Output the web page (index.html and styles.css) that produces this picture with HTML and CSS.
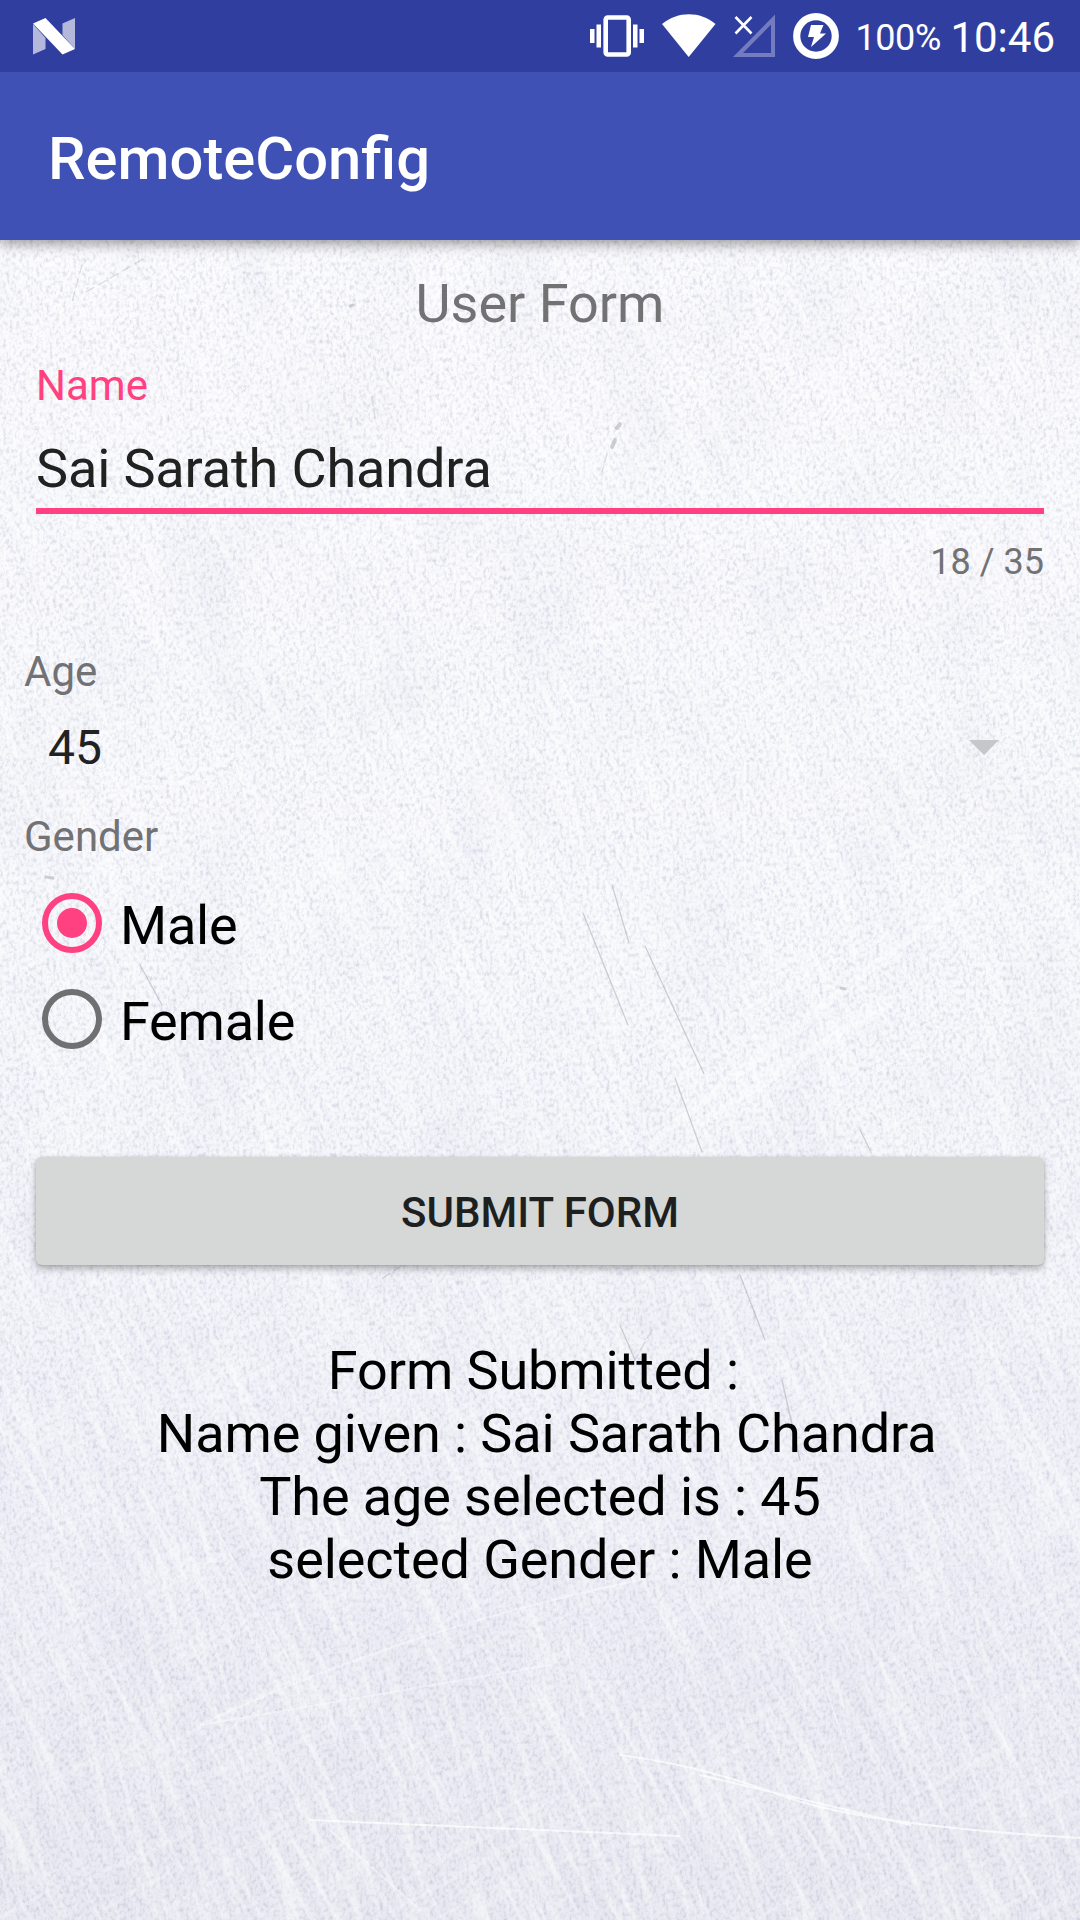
FILE: index.html
```html
<!DOCTYPE html>
<html lang="en">
<head>
<meta charset="utf-8">
<title>RemoteConfig</title>
<link rel="stylesheet" href="styles.css">
</head>
<body>
<div class="screen">
  <svg class="texture" width="1080" height="1680" viewBox="0 0 1080 1680" aria-hidden="true">
    <defs>
      <linearGradient id="shade" x1="0.6" y1="0" x2="0.6" y2="1">
        <stop offset="0" stop-color="#fbfbfe"/>
        <stop offset="0.45" stop-color="#f7f8fc"/>
        <stop offset="0.75" stop-color="#eff0f7"/>
        <stop offset="1" stop-color="#e7e8f0"/>
      </linearGradient>
      <filter id="grain" x="0" y="0" width="100%" height="100%" color-interpolation-filters="sRGB">
        <feTurbulence type="fractalNoise" baseFrequency="0.3 0.22" numOctaves="3" seed="4"/>
        <feColorMatrix values="0 0 0 0 0.66  0 0 0 0 0.67  0 0 0 0 0.76  1 0 0 0 -0.44"/>
      </filter>
      <filter id="streaks" x="0" y="0" width="100%" height="100%" color-interpolation-filters="sRGB">
        <feTurbulence type="fractalNoise" baseFrequency="0.14 0.006" numOctaves="3" seed="9"/>
        <feColorMatrix values="0 0 0 0 1  0 0 0 0 1  0 0 0 0 1  3 0 0 0 -1.45"/>
      </filter>
      <filter id="clouds" x="0" y="0" width="100%" height="100%" color-interpolation-filters="sRGB">
        <feTurbulence type="fractalNoise" baseFrequency="0.012 0.008" numOctaves="3" seed="21"/>
        <feColorMatrix values="0 0 0 0 0.8  0 0 0 0 0.81  0 0 0 0 0.88  1.6 0 0 0 -0.72"/>
      </filter>
    </defs>
    <rect width="1080" height="1680" fill="url(#shade)"/>
    <rect width="1080" height="1680" filter="url(#clouds)" opacity="0.22"/>
    <rect width="1080" height="1680" filter="url(#grain)"/>
    <rect x="-900" y="-900" width="2800" height="3200" filter="url(#streaks)" transform="rotate(-28 540 840)" opacity="0.48"/>
    <rect x="-900" y="-900" width="2800" height="3200" filter="url(#streaks)" transform="rotate(-14 540 840)" opacity="0.36"/>
    <rect x="-900" y="-900" width="2800" height="3200" filter="url(#streaks)" transform="rotate(62 540 840)" opacity="0.26"/>
    <g fill="none" stroke="#fff" stroke-linecap="round">
      <path stroke-width="9" opacity="0.35" d="M650 905Q800 780 1000 630M690 890 890 760"/>
      <path stroke-width="2" opacity="0.7" d="M620 1515Q700 1525 780 1555T1080 1598M700 1535 910 1585M310 1580 680 1596"/>
      <path stroke-width="2" opacity="0.4" d="M250 435 480 790M360 330 560 700M745 520 745 680M200 1485Q400 1390 640 1340M200 1485 550 1425M820 1430 850 1520M330 1590 420 1670M100 1080 300 1440"/>
    </g>
    <g fill="none" stroke="#b0b1bb" stroke-width="1.3" stroke-linecap="round" opacity="0.6">
      <path d="M612 645 629 703M645 706 704 834M583 673 628 785M675 838 702 912M740 1035 765 1100M782 1140 800 1220M860 890 870 910M620 1085 635 1120M140 725 162 765"/>
      <path stroke-dasharray="9 5" opacity="0.7" d="M86 52 145 18M82 25 72 62M372 157 375 178M652 1090 632 1125M425 1010 380 1040M607 214 602 232"/>
      <path stroke-width="4" d="M620 184 617 188M615 200 612 207"/>
      <path stroke-width="3" d="M350 66 353 65M46 637 53 638M841 748 845 749"/>
    </g>
  </svg>

  <header class="status-bar">
    <svg class="n-logo" width="44" height="38" viewBox="0 0 44 38">
      <path fill="#fff" fill-opacity=".64" d="M1 6 13.500 20V31L1 36.500ZM30.500 5.500 43 0V31L30.500 17Z"/>
      <path fill="#fff" d="M1 5.500 13.500 0 43 31 30.500 36.500Z"/>
    </svg>
    <div class="status-icons">
      <svg class="vibrate" width="54" height="42" viewBox="0 0 54 42">
        <path fill="#fff" d="M0 14h4.500v14H0ZM6.500 9.500h4.500v23H6.500ZM43 9.500h4.500v23H43ZM49.500 14H54v14h-4.500Z"/>
        <rect x="15.700" y="2.500" width="23" height="37" rx="2" fill="none" stroke="#fff" stroke-width="4.600"/>
      </svg>
      <svg class="wifi" width="54" height="43" viewBox="0 0 54 43"><path fill="#fff" d="M0 10C16-3 38-3 53.500 10L26.700 43Z"/></svg>
      <svg class="signal" width="43" height="43" viewBox="0 0 43 43">
        <path fill="#fff" fill-opacity=".32" fill-rule="evenodd" d="M0 43 42 0.500V43ZM10 39H38V10.500Z"/>
        <path stroke="#fff" stroke-width="2.600" d="M2.500 3 18.500 19.500M18.500 3 2.500 19.500"/>
      </svg>
      <svg class="battery" width="46" height="46" viewBox="0 0 46 46">
        <circle cx="23" cy="23" r="19.300" fill="none" stroke="#fff" stroke-width="7.200"/>
        <path fill="#fff" d="M18 12H30.500L27 20.500H33L18 34 21 24H15Z"/>
      </svg>
    </div>
    <span class="battery-level">100%</span>
    <span class="clock">10:46</span>
  </header>

  <div class="app-bar"><h1 class="app-title">RemoteConfig</h1></div>

  <main class="form">
    <h2 class="form-title">User Form</h2>
    <section class="name-field">
      <div class="name-label">Name</div>
      <div class="name-value">Sai Sarath Chandra</div>
      <div class="counter">18 / 35</div>
    </section>
    <div class="label age-label">Age</div>
    <div class="spinner">
      <span>45</span>
      <svg class="caret" width="30" height="15" viewBox="0 0 30 15"><path fill="#c6c7cb" d="M0 0H30L15 15Z"/></svg>
    </div>
    <div class="label gender-label">Gender</div>
    <div class="radio-group">
      <div class="radio"><span class="dot checked"></span><span>Male</span></div>
      <div class="radio"><span class="dot"></span><span>Female</span></div>
    </div>
    <button class="submit">SUBMIT FORM</button>
    <div class="result">Form Submitted : 
 Name given : Sai Sarath Chandra
The age selected is : 45
selected Gender : Male</div>
  </main>
</div>
</body>
</html>
```
FILE: styles.css
```css
* { box-sizing: border-box; }

body {
  margin: 0;
  font-family: Roboto, "Noto Sans", sans-serif;
}

.screen {
  position: relative;
  width: 1080px;
  height: 1920px;
  overflow: hidden;
  background: #f3f3f9;
}

/* Scratched paper backdrop, painted beneath the form */
.texture {
  position: absolute;
  left: 0;
  top: 240px;
}

.status-bar {
  position: relative;
  display: flex;
  align-items: flex-start;
  height: 72px;
  padding: 0 25px 0 32px;
  background: #303f9f;
  color: #fff;
  z-index: 2;
}

.n-logo { margin-top: 18px; }

.status-icons {
  display: flex;
  align-items: flex-start;
  margin-left: auto;
}

.vibrate { margin-top: 15px; }
.wifi { margin: 14px 0 0 18px; }
.signal { margin: 14px 0 0 17px; }
.battery { margin: 13px 0 0 17px; }

.battery-level {
  margin-left: 16px;
  width: 86px;
  font-size: 36px;
  line-height: 42px;
  padding-top: 17px;
  letter-spacing: -.4px;
}

.clock {
  margin-left: 9px;
  font-size: 42px;
  line-height: 48px;
  padding-top: 14px;
}

.app-bar {
  position: relative;
  display: flex;
  align-items: center;
  height: 168px;
  padding: 5px 48px 0;
  background: #3f51b5;
  box-shadow: 0 4px 12px rgba(0, 0, 0, .38);
  z-index: 1;
}

.app-title {
  margin: 0;
  font-size: 59.7px;
  font-weight: 500;
  line-height: 70px;
  color: #fff;
}

.form {
  position: relative;
  display: flex;
  flex-direction: column;
  padding: 32px 24px 0;
}

.form-title {
  margin: 0;
  font-size: 54px;
  font-weight: 400;
  line-height: 64px;
  text-align: center;
  color: #727274;
}

.name-field {
  display: flex;
  flex-direction: column;
  padding: 25px 12px 0;
}

.name-label {
  font-size: 42px;
  line-height: 50px;
  color: #ff4081;
}

.name-value {
  margin-top: 26px;
  height: 77px;
  font-size: 54px;
  line-height: 64px;
  letter-spacing: -.13px;
  color: #212121;
  border-bottom: 6px solid #ff4081;
}

.counter {
  margin-top: 27px;
  font-size: 36px;
  line-height: 42px;
  text-align: right;
  color: #727274;
}

.label {
  font-size: 42px;
  line-height: 50px;
  color: #727274;
}

.age-label { margin-top: 64px; }

.spinner {
  display: flex;
  align-items: center;
  justify-content: space-between;
  height: 72px;
  margin-top: 15px;
  padding: 0 57px 0 24px;
  font-size: 48px;
  line-height: 56px;
  color: #212121;
}

.caret { margin-bottom: 2px; }

.gender-label { margin-top: 28px; }

.radio-group { margin-top: 13px; }

.radio {
  display: flex;
  align-items: center;
  height: 96px;
  padding-left: 18px;
  gap: 18px;
  font-size: 54px;
  line-height: 64px;
  letter-spacing: -.2px;
  color: #000;
}

.radio span:last-child { padding-top: 6px; }

.dot {
  display: grid;
  place-items: center;
  width: 60px;
  height: 60px;
  border: 6px solid #707072;
  border-radius: 50%;
}

.checked { border-color: #ff4081; }

.checked::before {
  content: "";
  width: 30px;
  height: 30px;
  border-radius: 50%;
  background: #ff4081;
}

.submit {
  margin: 90px 12px 0;
  height: 108px;
  padding: 4px 0 0;
  border: 0;
  border-radius: 6px;
  background: #d6d7d7;
  box-shadow: 0 4px 7px rgba(0, 0, 0, .28), 0 0 3px rgba(0, 0, 0, .12);
  font: 500 42px/50px Roboto, "Noto Sans", sans-serif;
  color: #1e1f1f;
}

.result {
  margin-top: 74px;
  font-size: 54px;
  line-height: 63px;
  letter-spacing: -.1px;
  text-align: center;
  white-space: pre;
  color: #000;
}
```
